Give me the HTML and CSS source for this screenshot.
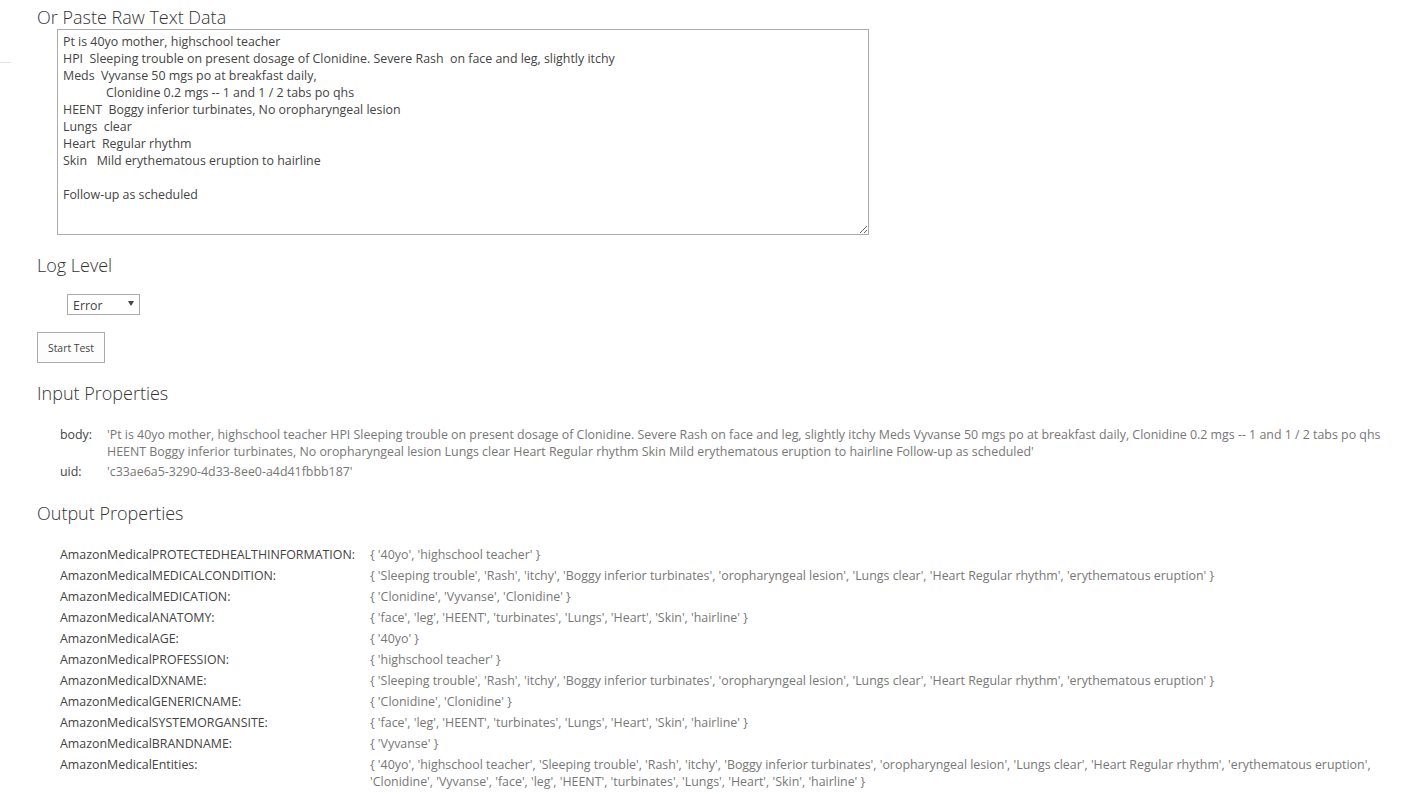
FILE: index.html
```html
<!DOCTYPE html>
<html lang="en">
<head>
    <meta charset="UTF-8">
    <meta name="viewport" content="width=device-width, initial-scale=1.0">
    <title>Medical Entity Test</title>
    <link rel="stylesheet" href="styles.css">
</head>
<body>

<div class="rail">
    <div class="rail-line"></div>
</div>

<div class="main">
    <h3>Or Paste Raw Text Data</h3>
    <div class="raw-box">
        <textarea id="rawText" class="raw-text" spellcheck="false">Pt is 40yo mother, highschool teacher
HPI  Sleeping trouble on present dosage of Clonidine. Severe Rash  on face and leg, slightly itchy
Meds  Vyvanse 50 mgs po at breakfast daily,
	Clonidine 0.2 mgs -- 1 and 1 / 2 tabs po qhs
HEENT  Boggy inferior turbinates, No oropharyngeal lesion
Lungs  clear
Heart  Regular rhythm
Skin   Mild erythematous eruption to hairline

Follow-up as scheduled</textarea>
    </div>

    <h3>Log Level</h3>
    <div class="log-level">
        <span class="select-wrap">
            <select id="logLevel">
                <option>Error</option>
                <option>Warning</option>
                <option>Info</option>
                <option>Verbose</option>
            </select>
        </span>
    </div>

    <button id="startBtn" class="start-btn">Start Test</button>

    <h3>Input Properties</h3>
    <div class="props input-props">
        <div class="prop-name">body:</div>
        <div class="prop-value">'Pt is 40yo mother, highschool teacher HPI Sleeping trouble on present dosage of Clonidine. Severe Rash on face and leg, slightly itchy Meds Vyvanse 50 mgs po at breakfast daily, Clonidine 0.2 mgs -- 1 and 1 / 2 tabs po qhs HEENT Boggy inferior turbinates, No oropharyngeal lesion Lungs clear Heart Regular rhythm Skin Mild erythematous eruption to hairline Follow-up as scheduled'</div>
        <div class="prop-name">uid:</div>
        <div class="prop-value">'c33ae6a5-3290-4d33-8ee0-a4d41fbbb187'</div>
    </div>

    <h3>Output Properties</h3>
    <div class="props output-props">
        <div class="prop-name">AmazonMedicalPROTECTEDHEALTHINFORMATION:</div>
        <div class="prop-value">{ '40yo', 'highschool teacher' }</div>
        <div class="prop-name">AmazonMedicalMEDICALCONDITION:</div>
        <div class="prop-value">{ 'Sleeping trouble', 'Rash', 'itchy', 'Boggy inferior turbinates', 'oropharyngeal lesion', 'Lungs clear', 'Heart Regular rhythm', 'erythematous eruption' }</div>
        <div class="prop-name">AmazonMedicalMEDICATION:</div>
        <div class="prop-value">{ 'Clonidine', 'Vyvanse', 'Clonidine' }</div>
        <div class="prop-name">AmazonMedicalANATOMY:</div>
        <div class="prop-value">{ 'face', 'leg', 'HEENT', 'turbinates', 'Lungs', 'Heart', 'Skin', 'hairline' }</div>
        <div class="prop-name">AmazonMedicalAGE:</div>
        <div class="prop-value">{ '40yo' }</div>
        <div class="prop-name">AmazonMedicalPROFESSION:</div>
        <div class="prop-value">{ 'highschool teacher' }</div>
        <div class="prop-name">AmazonMedicalDXNAME:</div>
        <div class="prop-value">{ 'Sleeping trouble', 'Rash', 'itchy', 'Boggy inferior turbinates', 'oropharyngeal lesion', 'Lungs clear', 'Heart Regular rhythm', 'erythematous eruption' }</div>
        <div class="prop-name">AmazonMedicalGENERICNAME:</div>
        <div class="prop-value">{ 'Clonidine', 'Clonidine' }</div>
        <div class="prop-name">AmazonMedicalSYSTEMORGANSITE:</div>
        <div class="prop-value">{ 'face', 'leg', 'HEENT', 'turbinates', 'Lungs', 'Heart', 'Skin', 'hairline' }</div>
        <div class="prop-name">AmazonMedicalBRANDNAME:</div>
        <div class="prop-value">{ 'Vyvanse' }</div>
        <div class="prop-name">AmazonMedicalEntities:</div>
        <div class="prop-value">{ '40yo', 'highschool teacher', 'Sleeping trouble', 'Rash', 'itchy', 'Boggy inferior turbinates', 'oropharyngeal lesion', 'Lungs clear', 'Heart Regular rhythm', 'erythematous eruption', 'Clonidine', 'Vyvanse', 'face', 'leg', 'HEENT', 'turbinates', 'Lungs', 'Heart', 'Skin', 'hairline' }</div>
    </div>
</div>

</body>
</html>
```

FILE: styles.css
```css
html {
    overflow: hidden;
}
body {
    font-family: 'Open Sans', 'Segoe UI', sans-serif;
    font-size: 12.4px;
    color: #444;
    background-color: #ffffff;
    margin: 0;
    padding: 0;
    display: flex;
}
.rail {
    width: 11px;
    flex-shrink: 0;
}
.rail-line {
    margin-top: 62px;
    border-top: 1px solid #e1e1e1;
}
.main {
    flex: 1;
    padding: 5px 11px 0 26px;
}
h3 {
    font-size: 18px;
    font-weight: 300;
    line-height: 24px;
    color: #333;
    margin: 0;
}
.raw-box {
    padding-left: 20px;
    margin-bottom: 18px;
}
.raw-text {
    display: block;
    box-sizing: border-box;
    width: 812px;
    height: 206px;
    margin: 0;
    padding: 3px 4px 2px 5px;
    border: 1px solid #ababab;
    border-radius: 0;
    font-family: 'Open Sans', 'Segoe UI', sans-serif;
    font-size: 12.4px;
    line-height: 17px;
    color: #444;
    tab-size: 43px;
    outline: none;
}
.log-level {
    padding: 17px 0 0 30px;
}
.select-wrap {
    position: relative;
    display: inline-block;
}
.select-wrap select {
    display: block;
    box-sizing: border-box;
    width: 73px;
    height: 21px;
    padding: 1px 4px 0 5px;
    border: 1px solid #ababab;
    border-radius: 0;
    background-color: #ffffff;
    font-family: 'Open Sans', 'Segoe UI', sans-serif;
    font-size: 12.4px;
    color: #444;
    appearance: none;
    -webkit-appearance: none;
    outline: none;
}
/* dropdown arrow */
.select-wrap::after {
    content: "";
    position: absolute;
    left: 61px;
    top: 7px;
    border-left: 3px solid transparent;
    border-right: 3px solid transparent;
    border-top: 5px solid #444;
    pointer-events: none;
}
.start-btn {
    display: block;
    box-sizing: border-box;
    width: 68px;
    height: 31px;
    margin: 17px 0 18px;
    padding: 0;
    border: 1px solid #ababab;
    border-radius: 0;
    background-color: #fdfdfd;
    font-family: 'Open Sans', 'Segoe UI', sans-serif;
    font-size: 10.4px;
    color: #444;
    cursor: pointer;
}
.start-btn:hover {
    background-color: #e6f2fa;
    border-color: #92c0e0;
}
.props {
    display: grid;
    line-height: 17px;
    padding-left: 23px;
}
.prop-value {
    color: #777;
}
.input-props {
    grid-template-columns: 47px 1fr;
    margin: 20px 0 19px;
}
.input-props > div {
    padding: 1px 0 2px;
}
.output-props {
    grid-template-columns: 310px 1fr;
    margin-top: 19px;
}
.output-props > div {
    padding: 2px 0;
}
```
